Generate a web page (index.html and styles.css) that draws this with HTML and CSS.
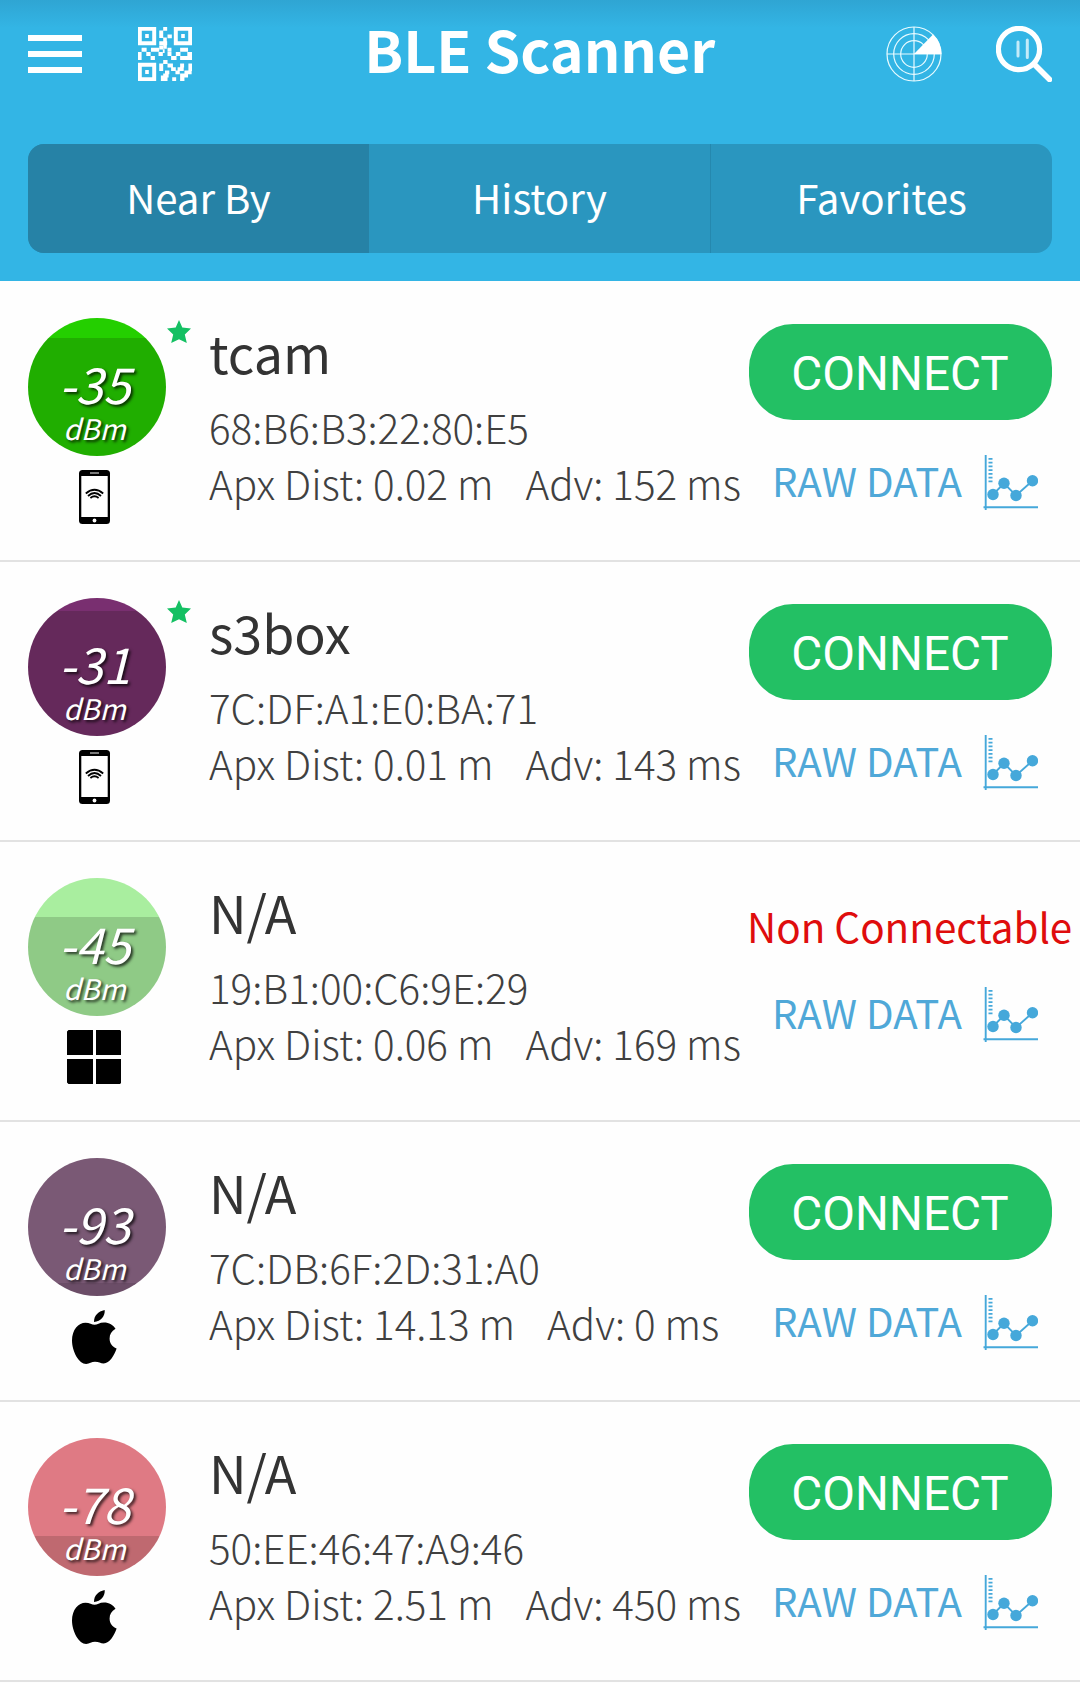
FILE: index.html
```html
<!DOCTYPE html>
<html lang="en">
<head>
<meta charset="utf-8">
<title>BLE Scanner</title>
<link rel="stylesheet" href="styles.css">
</head>
<body>
<svg class="defs" width="0" height="0" aria-hidden="true">
  <symbol id="star" viewBox="0 0 24 23"><path fill="#14c063" d="M12 0L15.3 7.6 24 8.6 17.8 14.4 19.8 23 12 19.2 4.2 23 6.2 14.4 0 8.6 8.7 7.6Z"/></symbol>
  <symbol id="phone" viewBox="0 0 54 54">
    <rect x="12" y="0" width="31" height="54" rx="3.5"/>
    <rect x="14.3" y="6" width="26.4" height="41" fill="#fff"/>
    <rect x="23" y="2.2" width="9" height="1.6" fill="#999"/>
    <circle cx="27.5" cy="50.5" r="1.9" fill="#fff"/>
    <g fill="none" stroke="#000" stroke-width="1.8"><path d="M18.8 23.5Q27.5 16 36.2 23.5M21 26Q27.5 20 34 26M23.4 28Q27.5 24.6 31.6 28"/></g>
  </symbol>
  <symbol id="windows" viewBox="0 0 54 54"><path d="M1.5 0H26V25H0V1.500ZM29 0H53L54 1V25H29ZM0 29H26V54H1.500L0 52.500ZM29 29H54V53L53 54H29Z"/></symbol>
  <symbol id="apple" viewBox="0 0 54 54"><path d="M27 12C27 5.500 31 1.500 37.700 0C38.200 6 34 11.500 27 12ZM27.500 14.700C30 14.700 32.500 12.400 37 12.400C42 12.400 46.500 15 48.500 18.800C44.500 21.300 42.600 24.500 42.600 28.400C42.600 33 45 36.500 49.600 38.500C47.500 45 42.500 53.500 36.700 53.500C33.500 53.500 31.700 51.800 28 51.800C24.500 51.800 22.500 54 19.200 54C12 54 5 41.500 5 30.500C5 19.500 11.500 12.700 18.500 12.700C22.500 12.700 25 14.700 27.500 14.700Z"/></symbol>
  <symbol id="chart" viewBox="0 0 55 55">
    <g fill="none" stroke="#45a8da">
      <path stroke-width="1.900" d="M2.700 0V55M0.500 52.300H55"/>
      <path stroke-width="4" stroke-dasharray="1.800 1.950" d="M7.500 3V27.500"/>
      <path stroke-width="1.900" d="M10 39.500L21 28.300 33 40.500 49.500 25.800"/>
    </g>
    <g fill="#45a8da"><circle cx="10" cy="39.500" r="5.700"/><circle cx="21" cy="28.300" r="5.700"/><circle cx="33" cy="40.500" r="5.700"/><circle cx="49.500" cy="25.800" r="5.700"/></g>
  </symbol>
</svg>

<header class="header">
  <div class="bar">
    <svg class="menu" width="54" height="38" viewBox="0 0 54 38"><path fill="#fff" d="M0 0H54V6H0ZM0 16H54V22H0ZM0 32H54V38H0Z"/></svg>
    <svg class="qr" width="54" height="54" viewBox="0 0 15 15" fill="none" stroke="#fff" stroke-width="1.1">
      <path d="M.5 .5H4.500V4.500H.5ZM10.500 .5H14.500V4.500H10.500ZM.5 10.500H4.500V14.500H.5Z"/>
      <path d="M2 2.500h1M12 2.500h1M2 12.500h1M7 .5h1.100M5.900 1.500h1.100M5.900 2.500h1.100M8.200 2.600h1.200M7 3.500h1M5.900 4.500h2.200M7 5.500h1M1 6.300h1.400M3.600 6.300h2.300M8.200 6.300h1.100M11.700 6.300h2.200M0 7.500h1M2.300 7.500h1.200M5.700 7.500h1.200M8.200 7.500h1.100M10.500 7.500h1.300M13.700 7.500h1.300M0 8.600h1M3.500 8.600h1.200M9.200 8.600h1.500M11.700 8.600h3.300M7 9.700h1.200M5.900 10.700h1.100M8.200 10.700h1.500M11.700 10.700h1.100M14 10.700h1M5.900 11.700h1.100M9.200 11.700h1.300M11 11.700h1.700M14 11.700h1M7.500 12.600h1.200M10.400 12.600h1.200M12.900 12.600h2M7 13.500h1.500M11.700 13.500h2.200M7 14.500h1.200M9.500 14.500h1.100M11.700 14.500h1.200"/>
      <path d="M5.900 5.700h1.100M6.900 6.700h.5M6.900 13.500v1.500"/>
    </svg>
    <h1 class="title">BLE Scanner</h1>
    <svg class="radar" width="56" height="56" viewBox="0 0 56 56" fill="none" stroke="#e9fbff" stroke-width="1.200">
      <circle cx="28" cy="28" r="27"/><circle cx="28" cy="28" r="20.300"/><circle cx="28" cy="28" r="13.300"/>
      <path d="M28 1V55M1 28H55"/><path fill="#fff" stroke="none" d="M28 28L47 8.500A27.500 27.500 0 0 1 55.500 28Z"/>
    </svg>
    <svg class="search" width="56" height="56" viewBox="0 0 56 56" fill="none" stroke="#fff">
      <circle cx="23" cy="23" r="20.600" stroke-width="5.200"/>
      <path stroke-width="5.600" d="M38 38L55.500 55.500"/><path stroke-width="3" stroke="#c4ebf9" stroke-linecap="round" d="M22 16V30M31.300 14V31.500"/>
    </svg>
  </div>
  <nav class="tabs">
    <a class="tab active">Near By</a>
    <a class="tab">History</a>
    <a class="tab">Favorites</a>
  </nav>
</header>

<main class="list">
  <section class="row">
    <div class="signal"><div class="badge green"><span class="rssi">-35</span><span class="unit">dBm</span></div><svg class="star"><use href="#star"/></svg><svg class="device"><use href="#phone"/></svg></div>
    <div class="info"><h2 class="name">tcam</h2><p class="line">68:B6:B3:22:80:E5</p><p class="line"><span>Apx Dist: 0.02 m</span><span>Adv: 152 ms</span></p></div>
    <div class="actions"><button class="connect">CONNECT</button><a class="raw"><span>RAW DATA</span><svg class="chart"><use href="#chart"/></svg></a></div>
  </section>
  <section class="row">
    <div class="signal"><div class="badge purple"><span class="rssi">-31</span><span class="unit">dBm</span></div><svg class="star"><use href="#star"/></svg><svg class="device"><use href="#phone"/></svg></div>
    <div class="info"><h2 class="name">s3box</h2><p class="line">7C:DF:A1:E0:BA:71</p><p class="line"><span>Apx Dist: 0.01 m</span><span>Adv: 143 ms</span></p></div>
    <div class="actions"><button class="connect">CONNECT</button><a class="raw"><span>RAW DATA</span><svg class="chart"><use href="#chart"/></svg></a></div>
  </section>
  <section class="row">
    <div class="signal"><div class="badge mint"><span class="rssi">-45</span><span class="unit">dBm</span></div><svg class="device"><use href="#windows"/></svg></div>
    <div class="info"><h2 class="name">N/A</h2><p class="line">19:B1:00:C6:9E:29</p><p class="line"><span>Apx Dist: 0.06 m</span><span>Adv: 169 ms</span></p></div>
    <div class="actions"><span class="blocked">Non Connectable</span><a class="raw"><span>RAW DATA</span><svg class="chart"><use href="#chart"/></svg></a></div>
  </section>
  <section class="row">
    <div class="signal"><div class="badge mauve"><span class="rssi">-93</span><span class="unit">dBm</span></div><svg class="device"><use href="#apple"/></svg></div>
    <div class="info"><h2 class="name">N/A</h2><p class="line">7C:DB:6F:2D:31:A0</p><p class="line"><span>Apx Dist: 14.13 m</span><span>Adv: 0 ms</span></p></div>
    <div class="actions"><button class="connect">CONNECT</button><a class="raw"><span>RAW DATA</span><svg class="chart"><use href="#chart"/></svg></a></div>
  </section>
  <section class="row">
    <div class="signal"><div class="badge rose"><span class="rssi">-78</span><span class="unit">dBm</span></div><svg class="device"><use href="#apple"/></svg></div>
    <div class="info"><h2 class="name">N/A</h2><p class="line">50:EE:46:47:A9:46</p><p class="line"><span>Apx Dist: 2.51 m</span><span>Adv: 450 ms</span></p></div>
    <div class="actions"><button class="connect">CONNECT</button><a class="raw"><span>RAW DATA</span><svg class="chart"><use href="#chart"/></svg></a></div>
  </section>
</main>
</body>
</html>
```
FILE: styles.css
```css
* { box-sizing: border-box; margin: 0; padding: 0; }
body {
  width: 1080px;
  height: 1683px;
  overflow: hidden;
  background: #fefefe;
  color: #333;
  font-family: "Noto Sans CJK SC", "Noto Sans", sans-serif;
  font-size: 40.2px;
}
svg { display: block; flex: none; }
.defs { position: absolute; }

.header {
  height: 281px;
  padding: 0 28px;
  background: linear-gradient(#2fa5d3 0, #33b5e5 28px);
  color: #fff;
}
.bar { display: flex; align-items: flex-start; height: 144px; }
.menu { margin-top: 35px; }
.qr { margin: 27px 0 0 56px; }
.title {
  flex: 1;
  margin-top: 9px;
  padding-left: 2px;
  line-height: 80px;
  font-size: 57.3px;
  font-weight: 700;
  text-align: center;
  white-space: nowrap;
}
.radar { margin: 26px 54.500px 0 0; }
.search { margin-top: 26px; }

.tabs {
  display: grid;
  grid-template-columns: 341px 342px 341px;
  height: 109px;
  border-radius: 16px;
  overflow: hidden;
  background: #2a96bf;
}
.tab { line-height: 105px; text-align: center; }
.tab + .tab { border-right: 1px solid #2588ae; }
.tab:last-child { border-right: 0; }
.active { background: #2682a6; }

.list { padding-top: 1px; }
.row {
  display: grid;
  grid-template-columns: 209px 540px 331px;
  height: 280px;
  border-bottom: 2px solid #e2e2e2;
}
.signal {
  display: grid;
  grid-template-columns: 138px 26px;
  grid-template-rows: 138px 54px;
  row-gap: 14px;
  padding: 36px 0 0 28px;
}
.badge {
  display: flex;
  flex-direction: column;
  align-items: center;
  padding: 38px 5px 0 0;
  border-radius: 50%;
  color: #fff;
  font-style: italic;
  text-shadow: 2px 2px 3px rgba(0, 0, 0, .75);
}
.rssi { line-height: 54px; font-size: 49.5px; }
.unit { margin-top: 3px; line-height: 30px; font-size: 28.4px; }
.green { background: linear-gradient(#24cf00 20px, #20ae00 20px); }
.purple { background: linear-gradient(#792f70 13px, #65295b 13px); }
.mint { background: linear-gradient(#a9ee9f 39px, #8fca86 39px); }
.mauve { background: linear-gradient(#7a5975 125px, #6b4d67 125px); }
.rose { background: linear-gradient(#df7a84 98px, #bf6970 98px); }
.star { width: 24px; height: 23px; margin: 2px 0 0 1px; }
.device { grid-row: 2; grid-column: 1; width: 54px; height: 54px; margin-left: 39px; }

.info { padding-top: 40px; white-space: nowrap; }
.name { margin-bottom: 17px; line-height: 60px; font-size: 52px; font-weight: 400; }
.line { display: flex; gap: 32px; line-height: 56px; font-size: 40.4px; font-weight: 300; color: #404040; }

.actions { display: flex; flex-direction: column; padding-top: 42px; white-space: nowrap; }
.connect {
  width: 303px;
  height: 96px;
  padding: 3px 1px 0 0;
  border: 0;
  border-radius: 44px;
  background: #23c064;
  color: #fff;
  font: 400 47.6px Roboto, sans-serif;
}
.raw { display: flex; gap: 21px; margin: 32px 0 0 23px; color: #4fa8d8; line-height: 56px; }
.chart { width: 55px; height: 55px; margin-top: 3px; }
.blocked { margin: 14px 0 0 -2px; line-height: 56px; font-size: 40.4px; color: #df0d0d; }
.blocked + .raw { margin-top: 30px; }
```
